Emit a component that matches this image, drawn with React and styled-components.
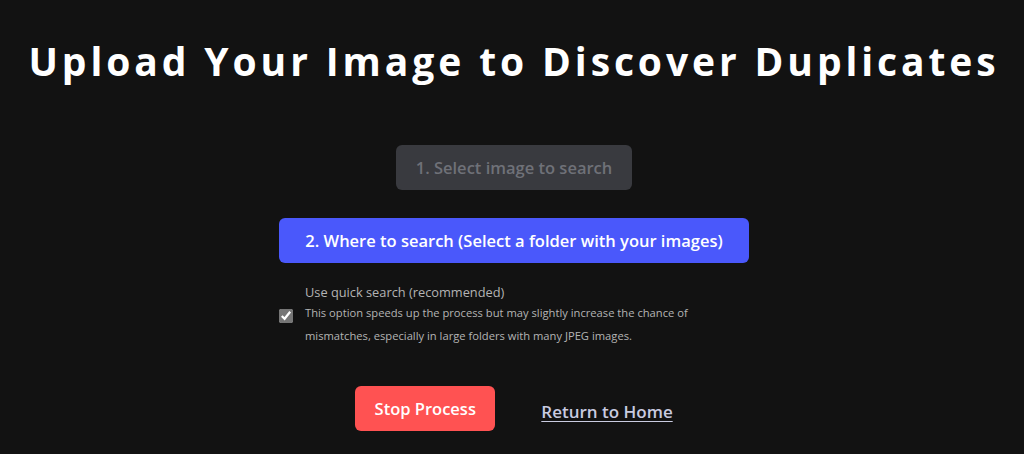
import React, { useState } from 'react'
import styled, { createGlobalStyle } from 'styled-components'

const GlobalStyle = createGlobalStyle`
  html, body {
    margin: 0;
    padding: 0;
    background: #121212;
  }

  body {
    font-family: 'Open Sans', 'Noto Sans', sans-serif;
    color: #ffffff;
  }
`

const Page = styled.div`
  display: flex;
  flex-direction: column;
  align-items: center;
  width: 100%;
  height: 454px;
  padding: 35px 0 0 4px;
  box-sizing: border-box;
  overflow: hidden;
`

const Title = styled.h1`
  margin: 0;
  font-size: 39px;
  font-weight: 700;
  letter-spacing: 3.9px;
  line-height: 52px;
  color: #ffffff;
  white-space: nowrap;
`

const Steps = styled.div`
  display: flex;
  flex-direction: column;
  align-items: center;
  margin-top: 58px;
`

const Buttons = styled.div`
  display: flex;
  flex-direction: column;
  align-items: center;
  gap: 28px;
`

const StepButton = styled.button`
  width: ${p => p.$width}px;
  height: 45px;
  border: none;
  border-radius: 6px;
  font-family: inherit;
  font-size: 16.5px;
  font-weight: 600;
  cursor: ${p => (p.disabled ? 'default' : 'pointer')};
  background-color: ${p => (p.disabled ? '#393a3f' : '#4a58fb')};
  color: ${p => (p.disabled ? '#6f7178' : '#ffffff')};
`

const Option = styled.label`
  display: flex;
  align-items: center;
  gap: 12px;
  align-self: flex-start;
  margin-top: 20px;
  cursor: pointer;

  input {
    width: 14px;
    height: 14px;
    margin: 2px 0 0 0;
    accent-color: #767676;
  }
`

const OptionText = styled.div`
  display: flex;
  flex-direction: column;
`

const OptionTitle = styled.span`
  font-size: 12.8px;
  line-height: 18px;
  color: #b4b4b4;
`

const OptionHint = styled.span`
  font-size: 11.2px;
  line-height: 23px;
  color: #b4b4b4;
  width: 400px;
`

const Actions = styled.div`
  display: flex;
  align-items: center;
  gap: 46px;
  margin-top: 39px;
`

const StopButton = styled.button`
  width: 140px;
  height: 45px;
  border: none;
  border-radius: 6px;
  background-color: #ff5252;
  color: #ffffff;
  font-family: inherit;
  font-size: 16.5px;
  font-weight: 600;
  cursor: pointer;
`

const HomeLink = styled.a`
  margin-top: 5px;
  font-size: 17px;
  font-weight: 600;
  color: #c9cbe0;
  text-decoration: underline;
  text-underline-offset: 3px;
  cursor: pointer;
`

const App = () => {
  const [quick, setQuick] = useState(true)

  return (
    <>
      <GlobalStyle />
      <Page>
        <Title>Upload Your Image to Discover Duplicates</Title>
        <Steps>
          <Buttons>
            <StepButton $width={236} disabled>
              1. Select image to search
            </StepButton>
            <StepButton $width={470}>
              2. Where to search (Select a folder with your images)
            </StepButton>
          </Buttons>
          <Option>
            <input
              type='checkbox'
              checked={quick}
              onChange={e => setQuick(e.target.checked)}
            />
            <OptionText>
              <OptionTitle>Use quick search (recommended)</OptionTitle>
              <OptionHint>
                This option speeds up the process but may slightly increase the
                chance of mismatches, especially in large folders with many JPEG
                images.
              </OptionHint>
            </OptionText>
          </Option>
        </Steps>
        <Actions>
          <StopButton>Stop Process</StopButton>
          <HomeLink href='#'>Return to Home</HomeLink>
        </Actions>
      </Page>
    </>
  )
}

export default App
